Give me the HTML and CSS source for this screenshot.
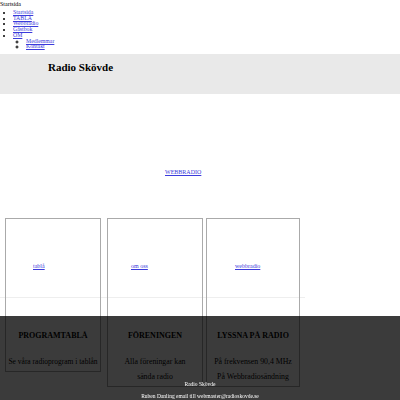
FILE: index.html
```html
<!DOCTYPE html>
<html lang="sv">
<head>
<meta charset="utf-8">
<title>Radio Skövde</title>
<link rel="stylesheet" href="styles.css">
</head>
<body>
<div class="crumb">Startsida</div>
<ul class="nav">
  <li><a href="#">Startsida</a></li>
  <li><a href="#">TABLÅ</a></li>
  <li><a href="#">Webbradio</a></li>
  <li><a href="#">Gästbok</a></li>
  <li><a href="#">OM</a>
    <ul class="sub">
      <li><a href="#">Medlemmar</a></li>
      <li><a href="#">Kontakt</a></li>
    </ul>
  </li>
</ul>
<header class="band">
  <h1 class="title">Radio Skövde</h1>
</header>
<div class="hero">
  <a href="#" class="hero-link">WEBBRADIO</a>
</div>
<div class="cards">
  <div class="card c1">
    <div class="card-top"><a href="#">tablå</a></div>
    <div class="card-body">
      <h2>PROGRAMTABLÅ</h2>
      <p>Se våra radioprogram i tablån</p>
    </div>
  </div>
  <div class="card c2">
    <div class="card-top"><a href="#">om oss</a></div>
    <div class="card-body">
      <h2>FÖRENINGEN</h2>
      <p>Alla föreningar kan<br>sända radio</p>
    </div>
  </div>
  <div class="card c3">
    <div class="card-top"><a href="#">webbradio</a></div>
    <div class="card-body">
      <h2>LYSSNA PÅ RADIO</h2>
      <p>På frekvensen 90,4 MHz<br>På Webbradiosändning</p>
    </div>
  </div>
</div>
<footer class="foot">
  <div class="foot-name">Radio Skövde</div>
  <div class="foot-mail">Ruben Danling email till webmaster@radioskovde.se</div>
</footer>
</body>
</html>
```
FILE: styles.css
```css
html, body {
  margin: 0;
  padding: 0;
  background: #fff;
  font-family: "Liberation Serif", "Times New Roman", serif;
  color: #000;
}
a { color: #3b3bdb; }
.crumb {
  font-size: 6px;
  line-height: 8px;
}
.nav {
  margin: 2px 0 0 0;
  padding-left: 13px;
  font-size: 5.8px;
  line-height: 5.7px;
}
.nav li { margin: 0; }
.sub {
  margin: 0;
  padding-left: 13px;
  list-style: circle;
}
.band {
  margin-top: 4px;
  height: 40px;
  background: #e9e9e9;
  display: flex;
  align-items: flex-start;
}
.title {
  margin: 7px 0 0 48px;
  font-size: 11px;
  line-height: 13px;
  font-weight: bold;
}
.hero {
  height: 124px;
  display: flex;
  align-items: flex-start;
  padding-left: 165px;
  padding-top: 74px;
  box-sizing: border-box;
}
.hero-link {
  font-size: 6px;
  line-height: 8px;
}
.cards {
  display: flex;
  align-items: flex-start;
  padding-left: 5px;
  width: 305px;
  background: linear-gradient(#eee, #eee) no-repeat 0 79px / 305px 1px;
}
.card {
  border: 1px solid #aaa;
  box-sizing: border-box;
  text-align: center;
  padding-bottom: 2px;
}
.c1 { width: 96px; margin-right: 6px; }
.c2 { width: 96px; margin-right: 3px; }
.c3 { width: 94px; }
.card-top {
  height: 79px;
  display: flex;
  align-items: flex-start;
  justify-content: flex-start;
  padding-top: 44px;
  box-sizing: border-box;
  font-size: 6px;
}
.c1 .card-top { padding-left: 27px; }
.c2 .card-top { padding-left: 23px; }
.c3 .card-top { padding-left: 28px; }
.card-body h2 {
  margin: 32px 0 0 0;
  font-size: 8px;
  line-height: 11px;
  font-weight: bold;
}
.card-body p {
  margin: 13px 0 0 0;
  font-size: 7.8px;
  line-height: 15px;
  white-space: nowrap;
}
.c1 .card-body p { font-size: 7.5px; }
.foot {
  position: fixed;
  left: 0;
  right: 0;
  bottom: 0;
  height: 84px;
  background: rgba(0, 0, 0, 0.77);
  color: #fff;
  text-align: center;
  font-size: 5.5px;
  display: flex;
  flex-direction: column;
  justify-content: flex-end;
  align-items: center;
}
.foot-name { line-height: 12px; margin-bottom: 2px; }
.foot-mail { line-height: 8px; }
```
